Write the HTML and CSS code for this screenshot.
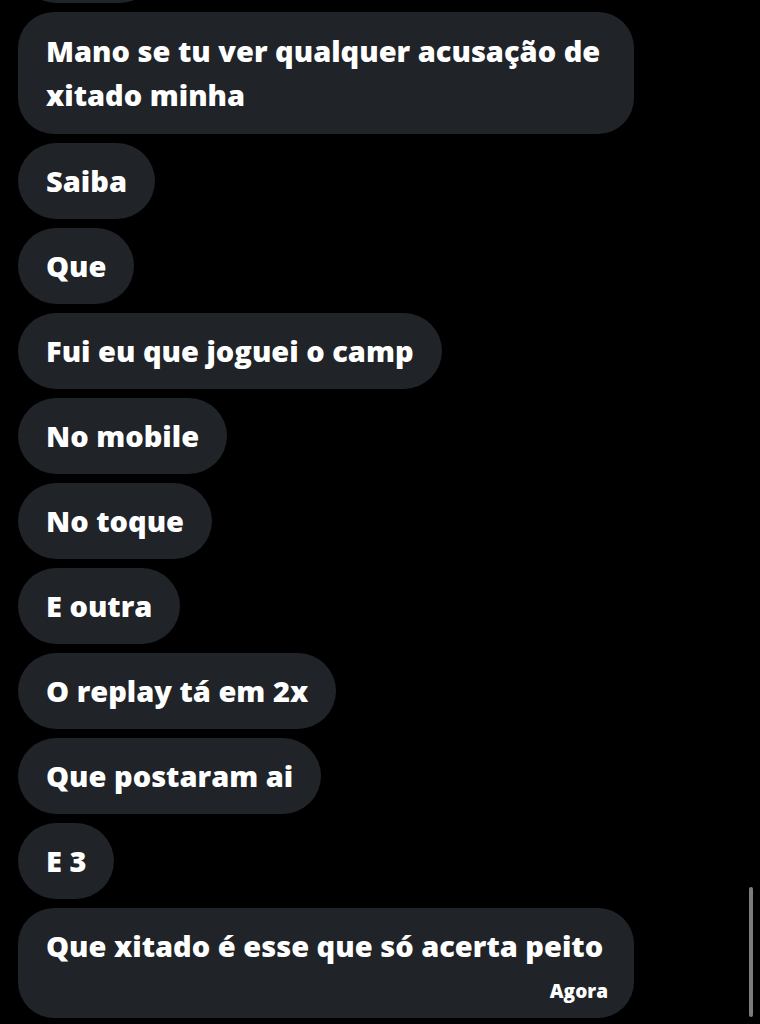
FILE: index.html
```html
<!DOCTYPE html>
<html lang="pt-BR">
<head>
<meta charset="utf-8">
<title>Mensagens</title>
<link rel="stylesheet" href="styles.css">
</head>
<body>
<div class="chat">
  <div class="bubble ghost" aria-hidden="true"></div>
  <div class="bubble multi">Mano se tu ver qualquer acusação de xitado minha</div>
  <div class="bubble">Saiba</div>
  <div class="bubble">Que</div>
  <div class="bubble">Fui eu que joguei o camp</div>
  <div class="bubble">No mobile</div>
  <div class="bubble">No toque</div>
  <div class="bubble">E outra</div>
  <div class="bubble">O replay tá em 2x</div>
  <div class="bubble">Que postaram ai</div>
  <div class="bubble">E 3</div>
  <div class="bubble last">
    <span>Que xitado é esse que só acerta peito</span>
    <span class="time">Agora</span>
  </div>
</div>
<div class="scrollbar"></div>
</body>
</html>
```
FILE: styles.css
```css
html, body {
  margin: 0;
  padding: 0;
  background: #000;
  height: 100%;
  overflow: hidden;
}
body {
  font-family: "Open Sans", "Liberation Sans", sans-serif;
  color: #fff;
  position: relative;
}
.chat {
  display: flex;
  flex-direction: column;
  align-items: flex-start;
  gap: 9px;
  padding-left: 18px;
}
.bubble {
  background: #202327;
  border-radius: 38px;
  padding: 16px 28px;
  font-size: 29px;
  font-weight: 800;
  line-height: 44px;
  box-sizing: border-box;
}
.ghost {
  margin-top: -73px;
  width: 140px;
  height: 76px;
}
.multi {
  width: 616px;
  border-radius: 36px;
  padding-top: 17px;
  padding-bottom: 17px;
}
.last {
  width: 616px;
  border-radius: 36px;
  display: flex;
  flex-direction: column;
  padding-bottom: 14px;
}
.time {
  align-self: flex-end;
  margin-top: 10px;
  margin-right: -2px;
  font-size: 19px;
  line-height: 26px;
}
.scrollbar {
  position: absolute;
  right: 7px;
  bottom: 7px;
  width: 4px;
  height: 130px;
  border-radius: 2px;
  background: #7c7c7c;
}
```
